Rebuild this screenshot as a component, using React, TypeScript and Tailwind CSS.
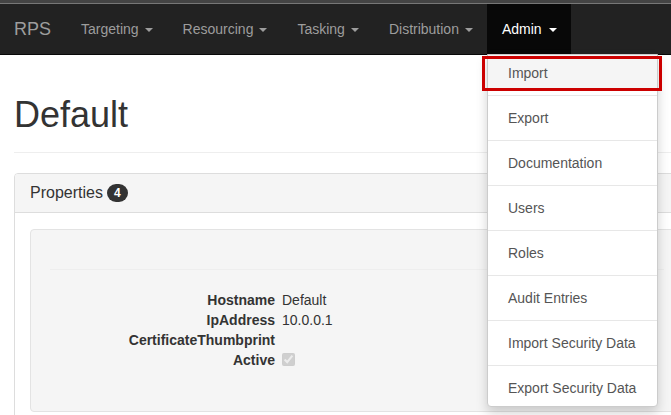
const navItems = ["Targeting", "Resourcing", "Tasking", "Distribution"];
const menuItems = ["Export", "Documentation", "Users", "Roles", "Audit Entries", "Import Security Data"];
const props = [
  { label: "Hostname", value: "Default" },
  { label: "IpAddress", value: "10.0.0.1" },
  { label: "CertificateThumbprint", value: "" },
];

function Caret({ className }: { className: string }) {
  return <span className={`inline-block h-0 w-0 border-x-4 border-t-4 border-x-transparent align-middle ${className}`} />;
}

export default function App() {
  return (
    <div className="relative h-[415px] w-[671px] overflow-hidden bg-white font-['Liberation_Sans',Arial,sans-serif] text-[14px] leading-[20px] text-[#333]">
      <div className="h-[4px] border-b border-[#777] bg-[#444]" />
      <nav className="flex h-[51px] border-b border-[#080808] bg-[#222]">
        <span className="py-[15px] pr-[15px] pl-[14px] text-[18px] text-[#9d9d9d]">RPS</span>
        {navItems.map((item, i) => (
          <span key={item} className={`py-[15px] pl-[15px] text-[#9d9d9d] ${i === 3 ? "pr-[14px]" : "pr-[15px]"}`}>
            {item}
            <Caret className="ml-[6px] border-t-[#9d9d9d]" />
          </span>
        ))}
        <span className="bg-[#080808] py-[15px] pr-[14px] pl-[15px] text-white">
          Admin
          <Caret className="ml-[7px] border-t-white" />
        </span>
      </nav>

      <main className="w-[700px] pl-[14px]">
        <div className="mt-[40px] mb-[20px] border-b border-[#eee] pb-[17px]">
          <h1 className="text-[36px] leading-[40px]">Default</h1>
        </div>
        <section className="rounded-[4px] border border-[#ddd]">
          <div className="h-[39px] rounded-t-[3px] border-b border-[#ddd] bg-[#f5f5f5] px-[15px] pt-[9px] text-[16px]">
            Properties
            <span className="ml-[4px] inline-block rounded-[10px] bg-[#333] px-[7px] py-[3px] align-[1px] text-[12px] leading-[12px] font-bold text-white">4</span>
          </div>
          <div className="px-[15px] pt-[16px] pb-[15px]">
            <div className="h-[183px] rounded-[4px] border border-[#e3e3e3] bg-[#f5f5f5] px-[19px] pt-[39px]">
              <hr className="border-[#eee]" />
              <dl className="mt-[20px]">
                {props.map((p) => (
                  <div key={p.label} className="flex h-[20px]">
                    <dt className="w-[225px] text-right font-bold">{p.label}</dt>
                    <dd className="ml-[7px]">{p.value}</dd>
                  </div>
                ))}
                <div className="flex h-[20px]">
                  <dt className="w-[225px] text-right font-bold">Active</dt>
                  <dd className="ml-[7px] pt-[3px]">
                    <input type="checkbox" checked disabled readOnly className="block h-[13px] w-[13px]" />
                  </dd>
                </div>
              </dl>
            </div>
          </div>
        </section>
      </main>

      <div className="absolute top-[54px] left-[487px] w-[171px] rounded-b-[4px] border border-[#ccc] bg-white shadow-[0_6px_12px_rgba(0,0,0,0.175)]">
        <div className="h-[40px]">
          <div className="h-[36px] bg-[#f5f5f5] px-[20px] py-[8px] text-[#555]">Import</div>
        </div>
        <div className="absolute top-[1px] -left-[6px] h-[35px] w-[180px] border-[3px] border-[#c00]" />
        {menuItems.map((item) => (
          <div key={item} className="h-[45px] border-t border-[#e7e7e7] px-[20px] pt-[12px] text-[#555]">{item}</div>
        ))}
        <div className="h-[41px] border-t border-[#e7e7e7] px-[20px] pt-[12px] text-[#555]">Export Security Data</div>
      </div>
    </div>
  );
}
